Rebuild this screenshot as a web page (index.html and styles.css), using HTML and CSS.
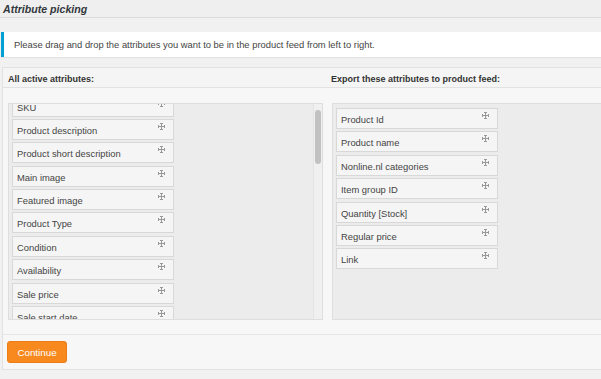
FILE: index.html
```
<!DOCTYPE html>
<html>
<head>
<meta charset="UTF-8">
<link rel="stylesheet" href="styles.css">
</head>
<body>
<h2 class="title">Attribute picking</h2>
<div class="notice"><p>Please drag and drop the attributes you want to be in the product feed from left to right.</p></div>

<div class="panel">
  <div class="panel-head">
    <div class="col-head">All active attributes:</div>
    <div class="col-head">Export these attributes to product feed:</div>
  </div>
  <div class="panel-body">
    <div class="box box-scroll">
      <ul class="attr-list scrolled">
        <li>SKU<i class="move"></i></li>
        <li>Product description<i class="move"></i></li>
        <li>Product short description<i class="move"></i></li>
        <li>Main image<i class="move"></i></li>
        <li>Featured image<i class="move"></i></li>
        <li>Product Type<i class="move"></i></li>
        <li>Condition<i class="move"></i></li>
        <li>Availability<i class="move"></i></li>
        <li>Sale price<i class="move"></i></li>
        <li>Sale start date<i class="move"></i></li>
      </ul>
      <div class="rail"><div class="thumb"></div></div>
    </div>
    <div class="box">
      <ul class="attr-list">
        <li>Product Id<i class="move"></i></li>
        <li>Product name<i class="move"></i></li>
        <li>Nonline.nl categories<i class="move"></i></li>
        <li>Item group ID<i class="move"></i></li>
        <li>Quantity [Stock]<i class="move"></i></li>
        <li>Regular price<i class="move"></i></li>
        <li>Link<i class="move"></i></li>
      </ul>
    </div>
  </div>
  <div class="panel-foot">
    <button class="btn-continue">Continue</button>
  </div>
</div>
</body>
</html>
```

FILE: styles.css
```
* {
  font-family: "Liberation Sans", Arial, sans-serif;
  box-sizing: border-box;
}
html, body {
  overflow: hidden;
}
body {
  margin: 0;
  width: 660px;
  background-color: #f1f1f1;
  color: #444;
}
.title {
  margin: 0;
  height: 18px;
  padding: 3px 0 0 3px;
  font-size: 10.6px;
  font-style: italic;
  font-weight: bold;
  color: #32373c;
  background-color: #efefef;
  border-bottom: 1px solid #dcdcdc;
}
.notice {
  margin: 14px 0 10px 1px;
  height: 25px;
  background-color: #fff;
  border-left: 3px solid #00a0d2;
  box-shadow: 0 1px 1px rgba(0, 0, 0, 0.06);
  padding: 0 0 0 10px;
  display: flex;
  align-items: center;
}
.notice p {
  margin: 0;
  font-size: 9.4px;
  color: #444;
}

.panel {
  margin-left: 2px;
  background-color: #f7f7f7;
  border: 1px solid #e2e2e2;
}
.panel-head {
  display: grid;
  grid-template-columns: 323px 1fr;
  height: 20px;
  border-bottom: 1px solid #e2e2e2;
  background-color: #f5f5f5;
}
.col-head {
  font-size: 9px;
  font-weight: bold;
  color: #333;
  padding: 6px 0 0 5px;
}
.panel-body {
  display: grid;
  grid-template-columns: 315px 1fr;
  gap: 9px;
  padding: 15px 0 14px 5px;
  border-bottom: 1px solid #e6e6e6;
}
.box {
  height: 217px;
  background-color: #ececec;
  border: 1px solid #dedede;
  overflow: hidden;
}
.box-scroll {
  display: flex;
  align-items: flex-start;
}
.attr-list {
  list-style: none;
  margin: 0;
  padding: 4px 0 0 3px;
  display: flex;
  flex-direction: column;
  gap: 2.4px;
}
.scrolled {
  flex: 1;
  margin-top: -12.5px;
}
.attr-list li {
  position: relative;
  flex-shrink: 0;
  width: 162px;
  height: 21px;
  padding: 5px 0 0 4px;
  font-size: 9.4px;
  color: #444;
  background-color: #f5f5f5;
  border: 1px solid #d8d8d8;
}
.move {
  position: absolute;
  top: 3px;
  right: 8px;
  width: 7px;
  height: 7px;
  background:
    linear-gradient(#999, #999) center / 1px 7px no-repeat,
    linear-gradient(#999, #999) center / 7px 1px no-repeat;
}
.move::before {
  content: "";
  position: absolute;
  left: 2px;
  top: 0;
  width: 3px;
  height: 7px;
  background:
    linear-gradient(#999, #999) top / 3px 1px no-repeat,
    linear-gradient(#999, #999) bottom / 3px 1px no-repeat;
}
.move::after {
  content: "";
  position: absolute;
  left: 0;
  top: 2px;
  width: 7px;
  height: 3px;
  background:
    linear-gradient(#999, #999) left / 1px 3px no-repeat,
    linear-gradient(#999, #999) right / 1px 3px no-repeat;
}
.rail {
  align-self: stretch;
  width: 9px;
  background-color: #f0f0f0;
  border-left: 1px solid #e4e4e4;
  padding: 6px 0 0 1px;
}
.thumb {
  width: 6px;
  height: 54px;
  border-radius: 3px;
  background-color: #c1c1c1;
}

.panel-foot {
  height: 34px;
  padding: 6px 0 0 4px;
}
.btn-continue {
  width: 60px;
  height: 22px;
  border: 1px solid #ee7d14;
  border-radius: 3px;
  background-color: #f7891f;
  color: #fff;
  font-size: 9.8px;
  padding: 0;
}
```
